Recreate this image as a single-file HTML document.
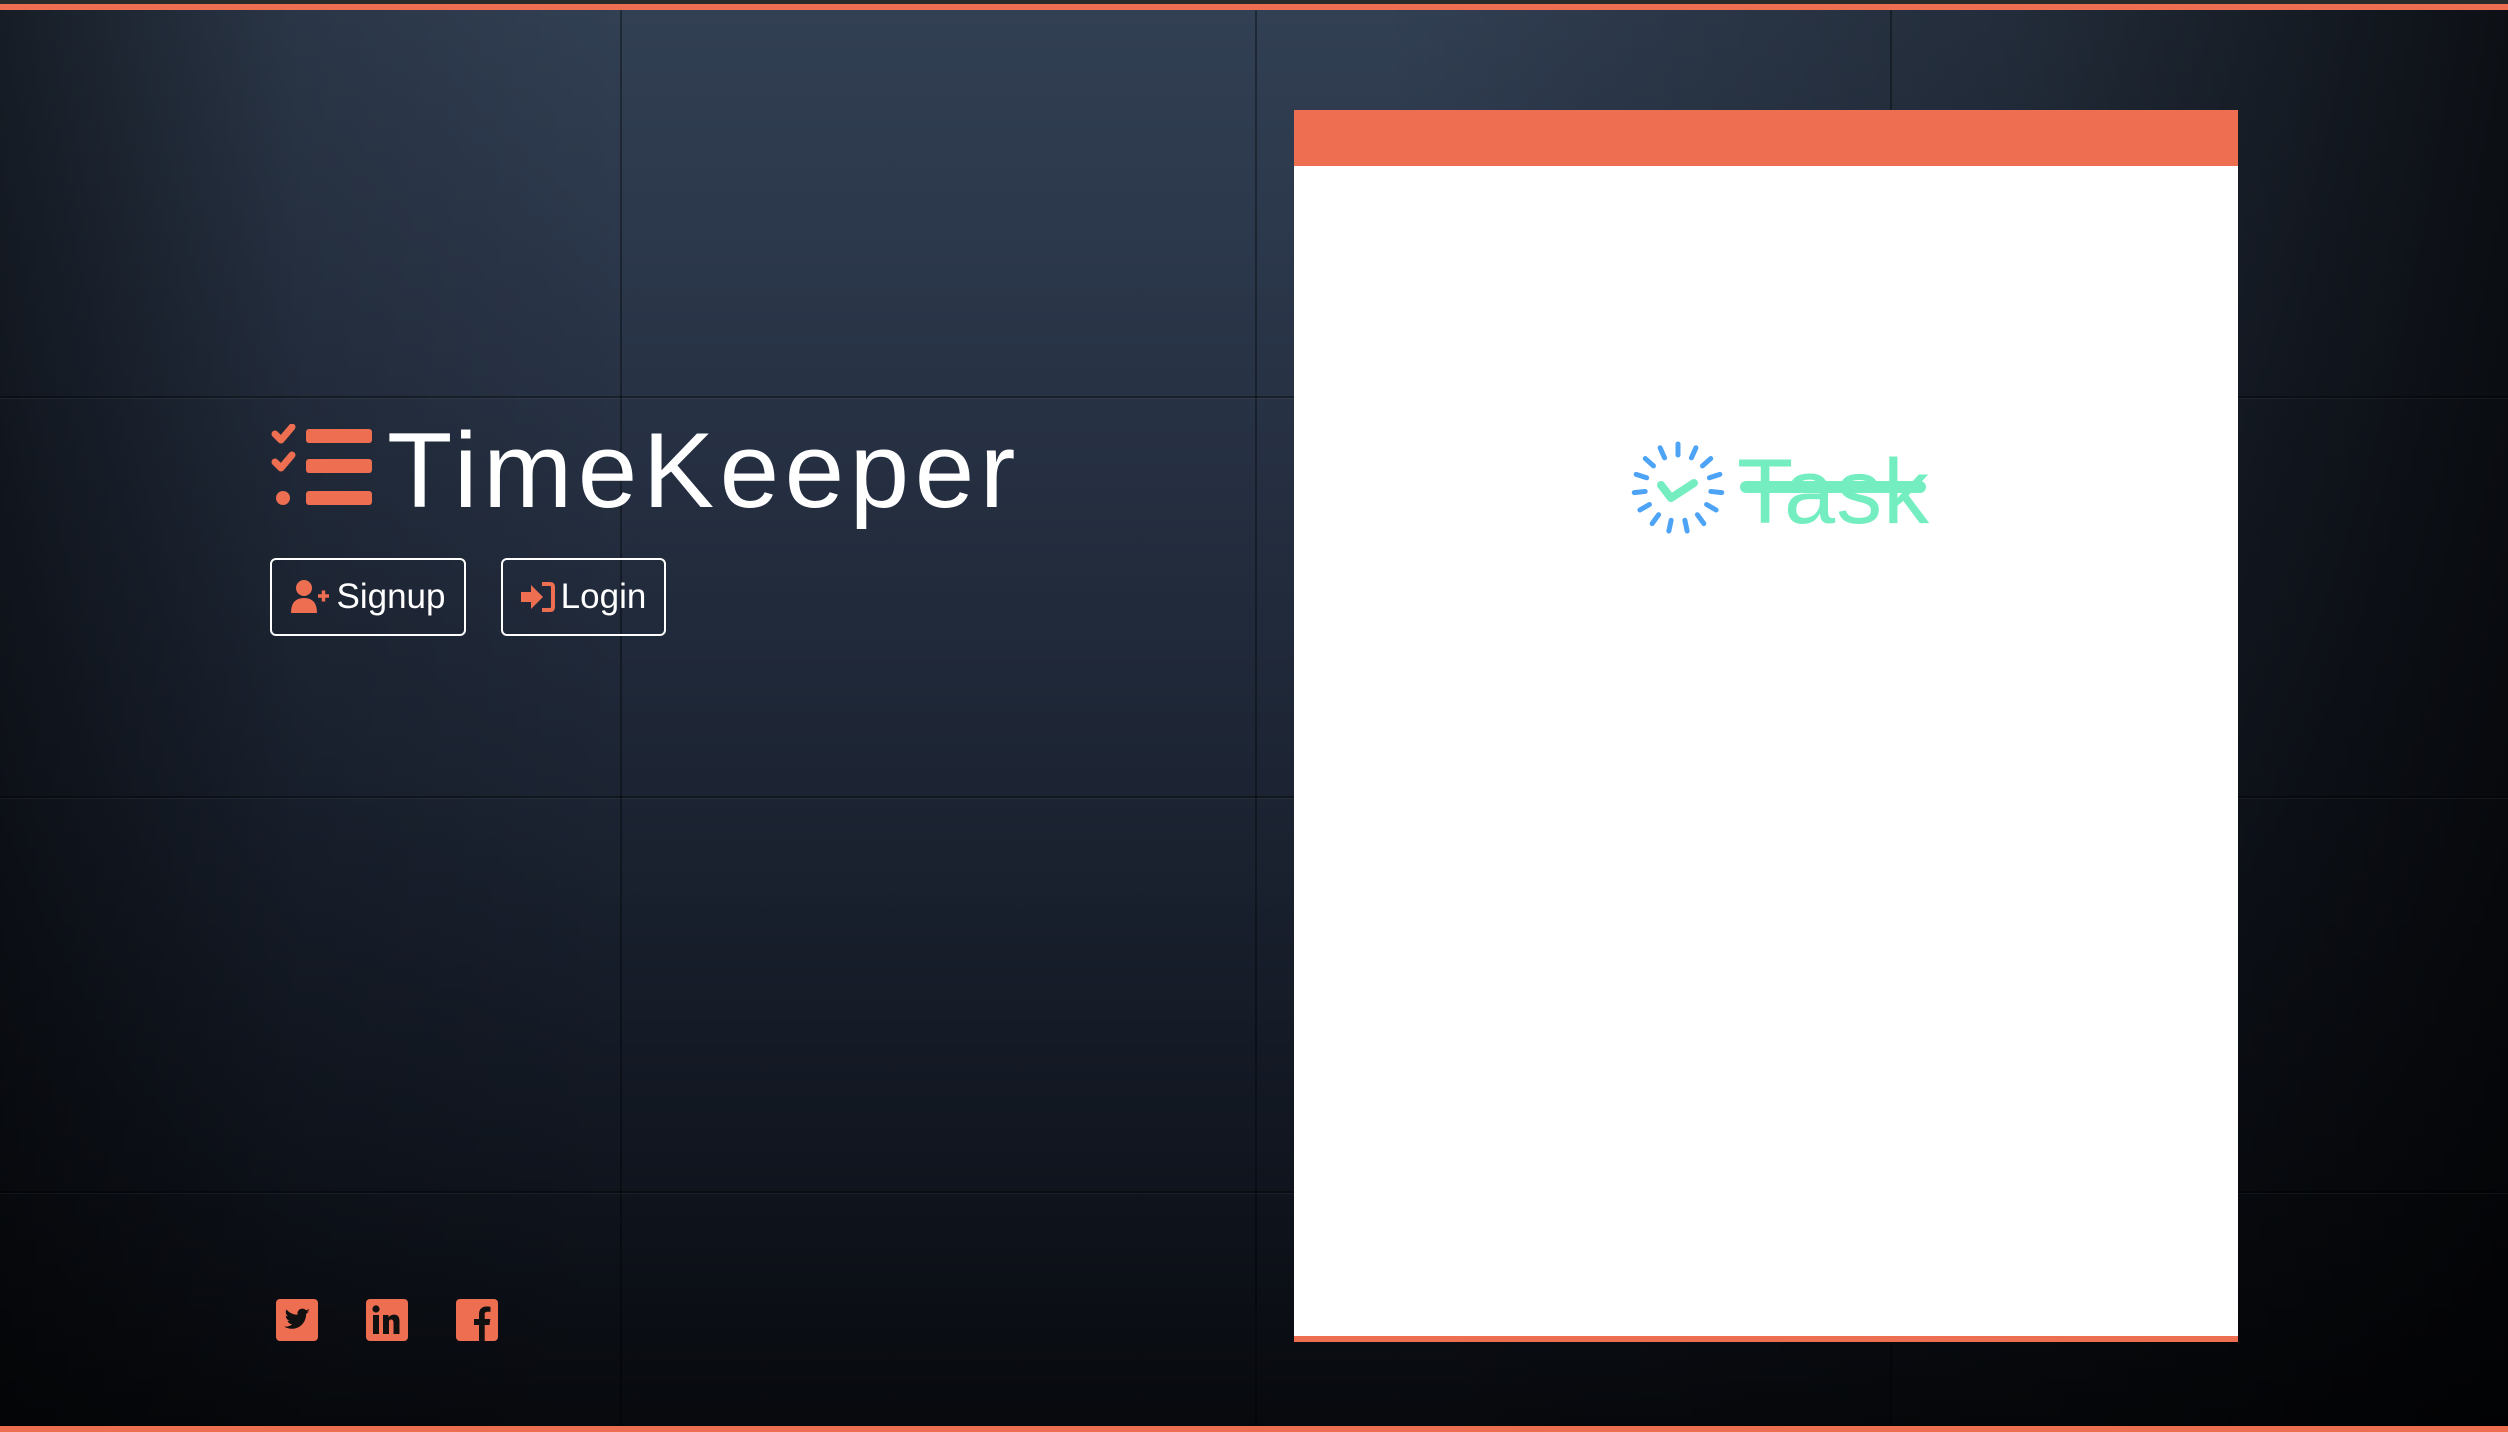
<!DOCTYPE html>
<html><head><meta charset="utf-8"><style>
html,body{margin:0;padding:0}
body{width:2508px;height:1432px;position:relative;overflow:hidden;font-family:"Liberation Sans",sans-serif;background:#0a0d13}
.bg1{position:absolute;inset:0;background:linear-gradient(180deg,#324054 0%,#283346 25%,#1c2433 55%,#111620 80%,#07090d 100%)}
.bg2{position:absolute;inset:0;background:linear-gradient(90deg,rgba(0,0,0,0.55) 0%,rgba(0,0,0,0.15) 12%,rgba(0,0,0,0) 25%,rgba(0,0,0,0) 55%,rgba(0,0,0,0.3) 80%,rgba(0,0,0,0.75) 100%)}
.gl{position:absolute;background:rgba(0,0,0,0.35)}
.gw{position:absolute;background:rgba(255,255,255,0.05)}
.top{position:absolute;left:0;top:0;width:2508px;height:4px;background:#2a2a2a}
.topo{position:absolute;left:0;top:4px;width:2508px;height:6px;background:#ee6e52}
.bot{position:absolute;left:0;top:1426px;width:2508px;height:6px;background:#ee6e52}
.card{position:absolute;left:1294px;top:110px;width:944px;height:1232px;background:#fff}
.card .hd{position:absolute;left:0;top:0;width:100%;height:56px;background:#ee6e52}
.card .bd{position:absolute;left:0;bottom:0;width:100%;height:6px;background:#ee6e52}
.title{position:absolute;left:387px;top:417px;font-size:107px;color:#fff;line-height:1;letter-spacing:5.5px;white-space:nowrap}
.btn{position:absolute;top:558px;height:78px;border:2px solid #fff;border-radius:6px;box-sizing:border-box;color:#fff;font-size:35px;display:flex;align-items:center;justify-content:center;gap:6px}
.soc{position:absolute;top:1299px;width:42px;height:42px;border-radius:4px;background:#ee6e52;overflow:hidden}
</style></head><body>
<div class="bg1"></div><div class="bg2"></div>
<div class="gl" style="left:620px;top:10px;width:2px;height:1416px"></div>
<div class="gl" style="left:1255px;top:10px;width:2px;height:1416px"></div>
<div class="gl" style="left:1890px;top:10px;width:2px;height:1416px"></div>
<div class="gl" style="left:0;top:396px;width:2508px;height:2px"></div>
<div class="gl" style="left:0;top:796px;width:2508px;height:2px"></div>
<div class="gl" style="left:0;top:1191px;width:2508px;height:2px"></div>
<div class="gw" style="left:0;top:398px;width:2508px;height:1px"></div>
<div class="gw" style="left:0;top:798px;width:2508px;height:1px"></div>
<div class="gw" style="left:0;top:1193px;width:2508px;height:1px"></div>
<div class="top"></div><div class="topo"></div><div class="bot"></div>

<svg style="position:absolute;left:271px;top:424px" width="102" height="84" viewBox="0 0 102 84">
<g fill="none" stroke="#ee6e52" stroke-width="7" stroke-linecap="round" stroke-linejoin="round">
<path d="M4 10 L10 16 L21 3"/><path d="M4 38 L10 44 L21 31"/></g>
<circle cx="12" cy="74" r="7" fill="#ee6e52"/>
<rect x="35" y="5" width="66" height="14" rx="3" fill="#ee6e52"/>
<rect x="35" y="35" width="66" height="14" rx="3" fill="#ee6e52"/>
<rect x="35" y="67" width="66" height="14" rx="3" fill="#ee6e52"/>
</svg>
<div class="title">TimeKeeper</div>

<div class="btn" style="left:270px;width:196px">
<svg width="40" height="36" viewBox="0 0 40 36"><circle cx="13" cy="9" r="8" fill="#ee6e52"/><path d="M0 34 Q0 19 13 19 Q26 19 26 34 Z" fill="#ee6e52"/><path d="M27 17h11M32.5 11.5v11" stroke="#ee6e52" stroke-width="3.5"/></svg>
<span>Signup</span></div>
<div class="btn" style="left:501px;width:165px">
<svg width="34" height="32" viewBox="0 0 34 32"><path d="M0 11h10V4l12 12-12 12v-7H0z" fill="#ee6e52"/><path d="M21 3h8q3 0 3 3v20q0 3-3 3h-8" fill="none" stroke="#ee6e52" stroke-width="4"/></svg>
<span>Login</span></div>

<div class="soc" style="left:276px"><svg width="42" height="42" viewBox="0 0 42 42"><path d="M34 12c-1 .5-2 .7-3 .8 1-.7 2-1.6 2.3-2.8-1 .6-2 1-3.2 1.3a5 5 0 0 0-8.6 4.5C17 15.6 13 13.6 10.5 10.5c-1.4 2.4-.6 5.4 1.6 6.8-.8 0-1.600-.3-2.300-.6 0 2.500 1.800 4.600 4 5-.7.200-1.500.300-2.300.100.700 2 2.500 3.400 4.700 3.500A10 10 0 0 1 8 27.500c2.300 1.400 5 2.300 7.700 2.300 9.400 0 14.600-7.800 14.400-14.800 1-.700 2-1.600 2.700-2.600z" fill="#111"/></svg></div>
<div class="soc" style="left:366px"><svg width="42" height="42" viewBox="0 0 42 42"><rect x="7" y="16" width="6" height="19" fill="#111"/><circle cx="10" cy="10" r="3.6" fill="#111"/><path d="M17 16h5.5v2.6c1-1.8 3-3 5.5-3 4.5 0 5.5 3 5.5 7V35h-6V24c0-2-.5-3.5-2.5-3.5S23 22 23 24v11h-6z" fill="#111"/></svg></div>
<div class="soc" style="left:456px"><svg width="42" height="42" viewBox="0 0 42 42"><path d="M23 42V26h-5v-6h5v-4.5C23 10 26 7.5 30.5 7.5c2 0 3.5.2 4 .3v5h-3c-2.3 0-2.8 1.1-2.8 2.8V20h5.6l-.8 6h-4.8v16z" fill="#111"/></svg></div>

<div class="card"><div class="hd"></div><div class="bd"></div>
<svg style="position:absolute;left:334px;top:328px" width="100" height="100" viewBox="0 0 100 100">
<g stroke="#4da3f5" stroke-width="5" stroke-linecap="round">
<g id="t"><line x1="50" y1="6" x2="50" y2="17"/></g>
<use href="#t" transform="rotate(24 50 50)"/><use href="#t" transform="rotate(48 50 50)"/><use href="#t" transform="rotate(72 50 50)"/><use href="#t" transform="rotate(96 50 50)"/><use href="#t" transform="rotate(120 50 50)"/><use href="#t" transform="rotate(144 50 50)"/><use href="#t" transform="rotate(168 50 50)"/><use href="#t" transform="rotate(192 50 50)"/><use href="#t" transform="rotate(216 50 50)"/><use href="#t" transform="rotate(240 50 50)"/><use href="#t" transform="rotate(264 50 50)"/><use href="#t" transform="rotate(288 50 50)"/><use href="#t" transform="rotate(312 50 50)"/><use href="#t" transform="rotate(336 50 50)"/>
</g>
<path d="M33 47 L43 60 L66 45" fill="none" stroke="#74eec1" stroke-width="8" stroke-linecap="round" stroke-linejoin="round"/>
</svg>
<div style="position:absolute;left:443px;top:336px;font-size:92px;color:#74eec1;line-height:1;letter-spacing:1px">Task</div>
<div style="position:absolute;left:446px;top:371px;width:186px;height:12px;border-radius:6px;background:#74eec1"></div>
</div>
</body></html>
